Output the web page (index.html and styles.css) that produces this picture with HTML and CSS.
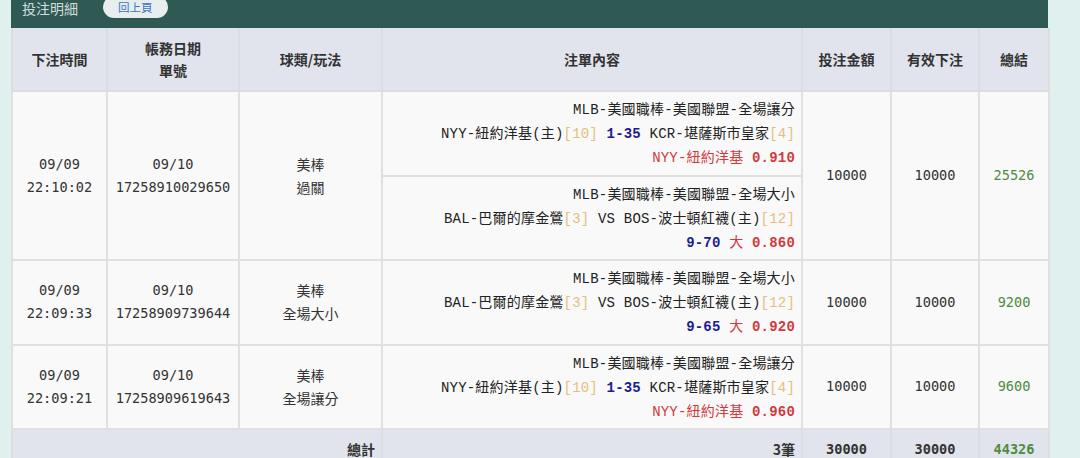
FILE: index.html
```html
<!DOCTYPE html>
<html lang="zh-Hant">
<head>
<meta charset="utf-8">
<title>投注明細</title>
<link rel="stylesheet" href="styles.css">
</head>
<body>
<div class="panel">
  <div class="bar">
    <span class="bar-title">投注明細</span>
    <span class="back-btn">回上頁</span>
  </div>
  <table class="grid">
    <colgroup>
      <col class="c-time"><col class="c-no"><col class="c-type"><col class="c-detail"><col class="c-amt"><col class="c-valid"><col class="c-res">
    </colgroup>
    <thead>
      <tr>
        <th>下注時間</th>
        <th>帳務日期<br>單號</th>
        <th>球類/玩法</th>
        <th>注單內容</th>
        <th>投注金額</th>
        <th>有效下注</th>
        <th>總結</th>
      </tr>
    </thead>
    <tbody>
      <tr>
        <td rowspan="2" class="mono">09/09<br>22:10:02</td>
        <td rowspan="2" class="mono">09/10<br>17258910029650</td>
        <td rowspan="2" class="sans">美棒<br>過關</td>
        <td class="detail">MLB-美國職棒-美國聯盟-全場讓分<br>NYY-紐約洋基(主)<span class="rank">[10]</span> <b class="hdp">1-35</b> KCR-堪薩斯市皇家<span class="rank">[4]</span><br><span class="red">NYY-紐約洋基 <b>0.910</b></span></td>
        <td rowspan="2" class="mono">10000</td>
        <td rowspan="2" class="mono">10000</td>
        <td rowspan="2" class="mono win">25526</td>
      </tr>
      <tr>
        <td class="detail">MLB-美國職棒-美國聯盟-全場大小<br>BAL-巴爾的摩金鶯<span class="rank">[3]</span> VS BOS-波士頓紅襪(主)<span class="rank">[12]</span><br><b class="hdp">9-70</b> <span class="red">大 <b>0.860</b></span></td>
      </tr>
      <tr>
        <td class="mono">09/09<br>22:09:33</td>
        <td class="mono">09/10<br>17258909739644</td>
        <td class="sans">美棒<br>全場大小</td>
        <td class="detail">MLB-美國職棒-美國聯盟-全場大小<br>BAL-巴爾的摩金鶯<span class="rank">[3]</span> VS BOS-波士頓紅襪(主)<span class="rank">[12]</span><br><b class="hdp">9-65</b> <span class="red">大 <b>0.920</b></span></td>
        <td class="mono">10000</td>
        <td class="mono">10000</td>
        <td class="mono win">9200</td>
      </tr>
      <tr>
        <td class="mono">09/09<br>22:09:21</td>
        <td class="mono">09/10<br>17258909619643</td>
        <td class="sans">美棒<br>全場讓分</td>
        <td class="detail">MLB-美國職棒-美國聯盟-全場讓分<br>NYY-紐約洋基(主)<span class="rank">[10]</span> <b class="hdp">1-35</b> KCR-堪薩斯市皇家<span class="rank">[4]</span><br><span class="red">NYY-紐約洋基 <b>0.960</b></span></td>
        <td class="mono">10000</td>
        <td class="mono">10000</td>
        <td class="mono win">9600</td>
      </tr>
    </tbody>
    <tfoot>
      <tr>
        <td colspan="3" class="sum-label">總計</td>
        <td class="sum-label">3筆</td>
        <td class="mono strong">30000</td>
        <td class="mono strong">30000</td>
        <td class="mono strong win">44326</td>
      </tr>
    </tfoot>
  </table>
</div>
</body>
</html>
```
FILE: styles.css
```css
html, body {
  margin: 0;
  padding: 0;
}
body {
  background: #dff0ef;
  font-family: "Noto Sans CJK TC", "Noto Sans", sans-serif;
  color: #333;
  overflow: hidden;
}
.panel {
  margin-left: 11px;
  width: 1037px;
}
.bar {
  display: flex;
  align-items: flex-start;
  height: 28px;
  background: #2f5a54;
  padding-left: 11px;
  box-sizing: border-box;
}
.bar-title {
  color: #d3dedc;
  font-size: 14px;
  line-height: 16px;
}
.back-btn {
  margin-left: 25px;
  margin-top: -4px;
  height: 22px;
  line-height: 22px;
  padding: 0 15px;
  border-radius: 11px;
  background: #e8eded;
  color: #3f74c8;
  font-size: 11.5px;
}
.grid {
  width: 1037px;
  table-layout: fixed;
  border-collapse: collapse;
}
.c-time { width: 95px; }
.c-no { width: 132px; }
.c-type { width: 143px; }
.c-detail { width: 420px; }
.c-amt { width: 89px; }
.c-valid { width: 88px; }
.c-res { width: 70px; }

.grid th {
  background: #e1e4ec;
  font-size: 14px;
  font-weight: 600;
  color: #333;
  line-height: 22px;
  padding: 8px 4px 8px;
  height: 46px;
  border: 2px solid #dcdde0;
  border-top: 0;
}
.grid td {
  background: #f9f9f9;
  border: 2px solid #e0e0e0;
  text-align: center;
  vertical-align: middle;
  font-size: 14px;
  line-height: 23px;
  padding: 0 4px;
  color: #333;
}
.grid td.mono {
  font-family: "DejaVu Sans Mono", "Noto Sans CJK TC", monospace;
  font-size: 13.6px;
}
.grid td.sans {
  font-family: "Noto Sans CJK TC", sans-serif;
}
.grid td.detail {
  text-align: right;
  font-family: "Liberation Mono", "Noto Sans CJK TC", monospace;
  font-size: 14px;
  letter-spacing: 0.2px;
  line-height: 24px;
  padding: 6px 6px 4.5px 6px;
  color: #222;
}
.rank {
  color: #e6bf7c;
}
.hdp {
  color: #1d1d8f;
}
.red {
  color: #d2393d;
}
.grid td.win {
  color: #4d8c3e;
}
.grid tfoot td {
  background: #e1e4ec;
  border-color: #dcdde0;
  height: 38px;
  padding-top: 0;
  padding-bottom: 0;
}
.grid td.sum-label {
  text-align: right;
  font-weight: 600;
  padding-right: 6px;
  color: #333;
}
.grid td.strong {
  font-weight: 700;
}
```
